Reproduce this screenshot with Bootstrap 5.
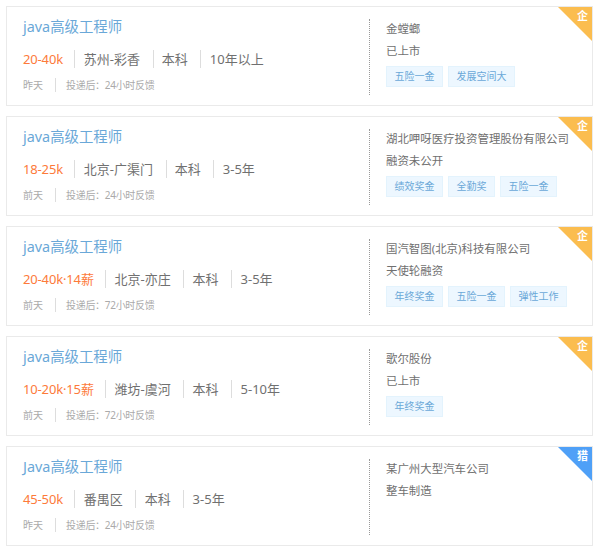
<!DOCTYPE html>
<html lang="zh"><head><meta charset="utf-8">
<link rel="stylesheet" href="https://cdn.jsdelivr.net/npm/bootstrap@5.3.0/dist/css/bootstrap.min.css">
<style>
body{background:#fff;font-family:"Noto Sans","Noto Sans CJK SC",sans-serif;color:#666;overflow:hidden}
.job-list{padding:6px 7px 0 6px}
.job-card{height:100px;border:1px solid #eaeaea;background:#fff;margin-bottom:10px;position:relative;overflow:hidden}
.job-left{width:362px;padding:9px 0 0 16px}
.job-title{font-size:14.4px;line-height:22px;color:#6aa8d8;height:22px}
.job-meta{font-size:13px;line-height:17px;margin-top:13px;color:#707070}
.job-meta span{padding:0 12.6px 0 8.3px;border-left:1px solid #ddd}
.job-meta span:first-child{padding:0 11.5px 0 0;border-left:0;color:#fd7a3a;letter-spacing:-.15px}
.job-foot{font-size:10px;line-height:14px;margin-top:10px;color:#aaa}
.job-foot span{padding:0 0 0 10px;border-left:1px solid #ddd;letter-spacing:-.3px}
.job-foot span:first-child{padding:0 12px 0 0;border-left:0;letter-spacing:0}
.job-right{margin-top:12px;height:76px;border-left:1px dotted #999;padding-left:16px;font-size:11.45px;color:#707070}
.co-name{line-height:16px;margin-top:2px}
.co-stage{line-height:16px;margin-top:6px}
.perk-row{margin-top:7px;gap:5px}
.perk{font-size:10px;line-height:19px;height:21px;padding:0 7.5px;background:#edf7ff;border:1px solid #e3f3fd;color:#6aa8d8}
.corner{position:absolute;right:0;top:0;width:34px;height:34px;clip-path:polygon(0 0,100% 0,100% 100%)}
.corner-text{position:absolute;right:4px;top:3px;font-size:11px;line-height:12px;color:#fff;font-weight:700}
.c-ent{background:#fbbd4f}
.c-hunt{background:#4fa0f7}
</style></head><body>
<div class="job-list">
<div class="job-card d-flex"><div class="job-left"><div class="job-title">java高级工程师</div><div class="job-meta"><span>20-40k</span><span>苏州-彩香</span><span>本科</span><span>10年以上</span></div><div class="job-foot"><span>昨天</span><span>投递后：24小时反馈</span></div></div>
<div class="job-right"><div class="co-name">金螳螂</div><div class="co-stage">已上市</div><div class="d-flex perk-row"><div class="perk">五险一金</div><div class="perk">发展空间大</div></div></div><div class="corner c-ent"></div><div class="corner-text">企</div></div>
<div class="job-card d-flex"><div class="job-left"><div class="job-title">java高级工程师</div><div class="job-meta"><span>18-25k</span><span>北京-广渠门</span><span>本科</span><span>3-5年</span></div><div class="job-foot"><span>前天</span><span>投递后：24小时反馈</span></div></div>
<div class="job-right"><div class="co-name">湖北呷呀医疗投资管理股份有限公司</div><div class="co-stage">融资未公开</div><div class="d-flex perk-row"><div class="perk">绩效奖金</div><div class="perk">全勤奖</div><div class="perk">五险一金</div></div></div><div class="corner c-ent"></div><div class="corner-text">企</div></div>
<div class="job-card d-flex"><div class="job-left"><div class="job-title">java高级工程师</div><div class="job-meta"><span>20-40k·14薪</span><span>北京-亦庄</span><span>本科</span><span>3-5年</span></div><div class="job-foot"><span>前天</span><span>投递后：72小时反馈</span></div></div>
<div class="job-right"><div class="co-name">国汽智图(北京)科技有限公司</div><div class="co-stage">天使轮融资</div><div class="d-flex perk-row"><div class="perk">年终奖金</div><div class="perk">五险一金</div><div class="perk">弹性工作</div></div></div><div class="corner c-ent"></div><div class="corner-text">企</div></div>
<div class="job-card d-flex"><div class="job-left"><div class="job-title">java高级工程师</div><div class="job-meta"><span>10-20k·15薪</span><span>潍坊-虞河</span><span>本科</span><span>5-10年</span></div><div class="job-foot"><span>前天</span><span>投递后：72小时反馈</span></div></div>
<div class="job-right"><div class="co-name">歌尔股份</div><div class="co-stage">已上市</div><div class="d-flex perk-row"><div class="perk">年终奖金</div></div></div><div class="corner c-ent"></div><div class="corner-text">企</div></div>
<div class="job-card d-flex"><div class="job-left"><div class="job-title">Java高级工程师</div><div class="job-meta"><span>45-50k</span><span>番禺区</span><span>本科</span><span>3-5年</span></div><div class="job-foot"><span>昨天</span><span>投递后：24小时反馈</span></div></div>
<div class="job-right"><div class="co-name">某广州大型汽车公司</div><div class="co-stage">整车制造</div></div><div class="corner c-hunt"></div><div class="corner-text">猎</div></div>
</div>
</body></html>
